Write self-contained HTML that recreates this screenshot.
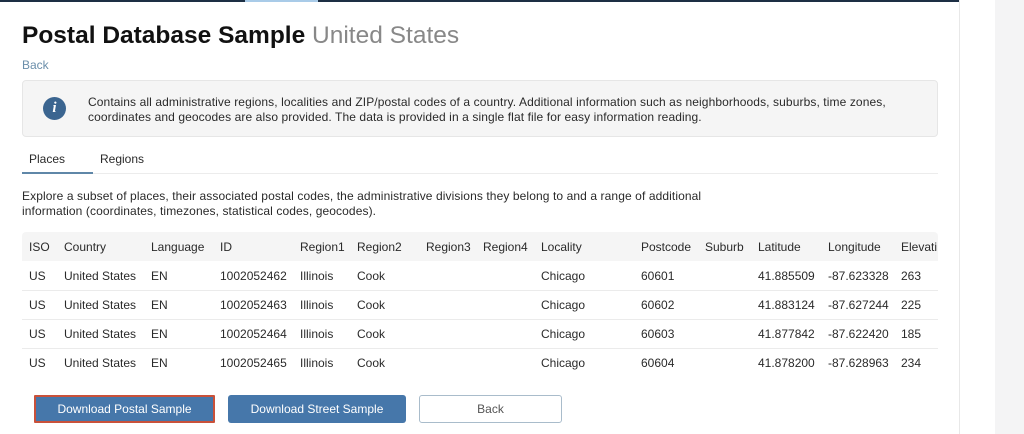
<!DOCTYPE html>
<html><head><meta charset="utf-8"><style>
*{margin:0;padding:0;box-sizing:border-box}
body{width:1024px;height:434px;overflow:hidden;background:#fff;font-family:"Liberation Sans",sans-serif;color:#222;position:relative}
.a{position:absolute;white-space:nowrap}
.t{font-size:12px;color:#2a2a2a}
.btn{position:absolute;top:395px;height:28px;font-size:12px;display:flex;align-items:center;justify-content:center;border-radius:3px;color:#fff;background:#4677aa}
</style></head><body>
<div class="a" style="left:0;top:0;width:960px;height:2px;background:#1d2f44"></div>
<div class="a" style="left:245px;top:0;width:73px;height:2px;background:#a9cbe8"></div>
<div class="a" style="left:959px;top:0;width:1px;height:434px;background:#e8e8e8"></div>
<div class="a" style="left:995px;top:0;width:29px;height:434px;background:#f4f4f5"></div>

<div class="a" style="left:22px;top:22px;font-size:24.5px;font-weight:bold;color:#111">Postal Database Sample <span style="font-weight:normal;color:#888">United States</span></div>
<div class="a" style="left:22px;top:58px;font-size:12px;color:#6a8eaa">Back</div>

<div class="a" style="left:22px;top:80px;width:916px;height:57px;background:#f5f5f5;border:1px solid #e6e6e6;border-radius:4px"></div>
<div class="a" style="left:43px;top:97px;width:23px;height:23px;border-radius:50%;background:#3b6590;color:#fff;font:bold italic 15px 'Liberation Serif',serif;text-align:center;line-height:23px">i</div>
<div class="a t" style="left:88px;top:95px;line-height:15px;letter-spacing:0.1px">Contains all administrative regions, localities and ZIP/postal codes of a country. Additional information such as neighborhoods, suburbs, time zones,<br>coordinates and geocodes are also provided. The data is provided in a single flat file for easy information reading.</div>

<div class="a t" style="left:29px;top:152px">Places</div>
<div class="a t" style="left:100px;top:152px">Regions</div>
<div class="a" style="left:22px;top:173px;width:916px;height:1px;background:#ececec"></div>
<div class="a" style="left:22px;top:172px;width:71px;height:2px;background:#5f87a8"></div>

<div class="a t" style="left:22px;top:189px;line-height:15px;letter-spacing:0.1px">Explore a subset of places, their associated postal codes, the administrative divisions they belong to and a range of additional<br>information (coordinates, timezones, statistical codes, geocodes).</div>

<div class="a" style="left:22px;top:232px;width:916px;height:29px;background:#f5f5f5;border-radius:4px 4px 0 0"></div>
<div class="a" style="left:22px;top:290px;width:916px;height:1px;background:#ebebeb"></div>
<div class="a" style="left:22px;top:319px;width:916px;height:1px;background:#ebebeb"></div>
<div class="a" style="left:22px;top:348px;width:916px;height:1px;background:#ebebeb"></div>

<div id="tbl"></div>
<script>
var xs=[29,64,151,220,300,357,426,483,541,641,705,758,828,901];
var rows=[["ISO","Country","Language","ID","Region1","Region2","Region3","Region4","Locality","Postcode","Suburb","Latitude","Longitude","Elevati"],
["US","United States","EN","1002052462","Illinois","Cook","","","Chicago","60601","","41.885509","-87.623328","263"],
["US","United States","EN","1002052463","Illinois","Cook","","","Chicago","60602","","41.883124","-87.627244","225"],
["US","United States","EN","1002052464","Illinois","Cook","","","Chicago","60603","","41.877842","-87.622420","185"],
["US","United States","EN","1002052465","Illinois","Cook","","","Chicago","60604","","41.878200","-87.628963","234"]];
var h="";
rows.forEach(function(r,i){r.forEach(function(c,j){if(c)h+='<div class="a t" style="left:'+xs[j]+'px;top:'+(240+i*29)+'px">'+c+'</div>';});});
document.getElementById("tbl").innerHTML=h;
</script>

<div class="btn" style="left:34px;width:181px;border:2px solid #c9513a;border-radius:1px">Download Postal Sample</div>
<div class="btn" style="left:228px;width:178px">Download Street Sample</div>
<div class="btn" style="left:419px;width:143px;background:#fff;color:#555;border:1px solid #a9bccb">Back</div>
</body></html>
